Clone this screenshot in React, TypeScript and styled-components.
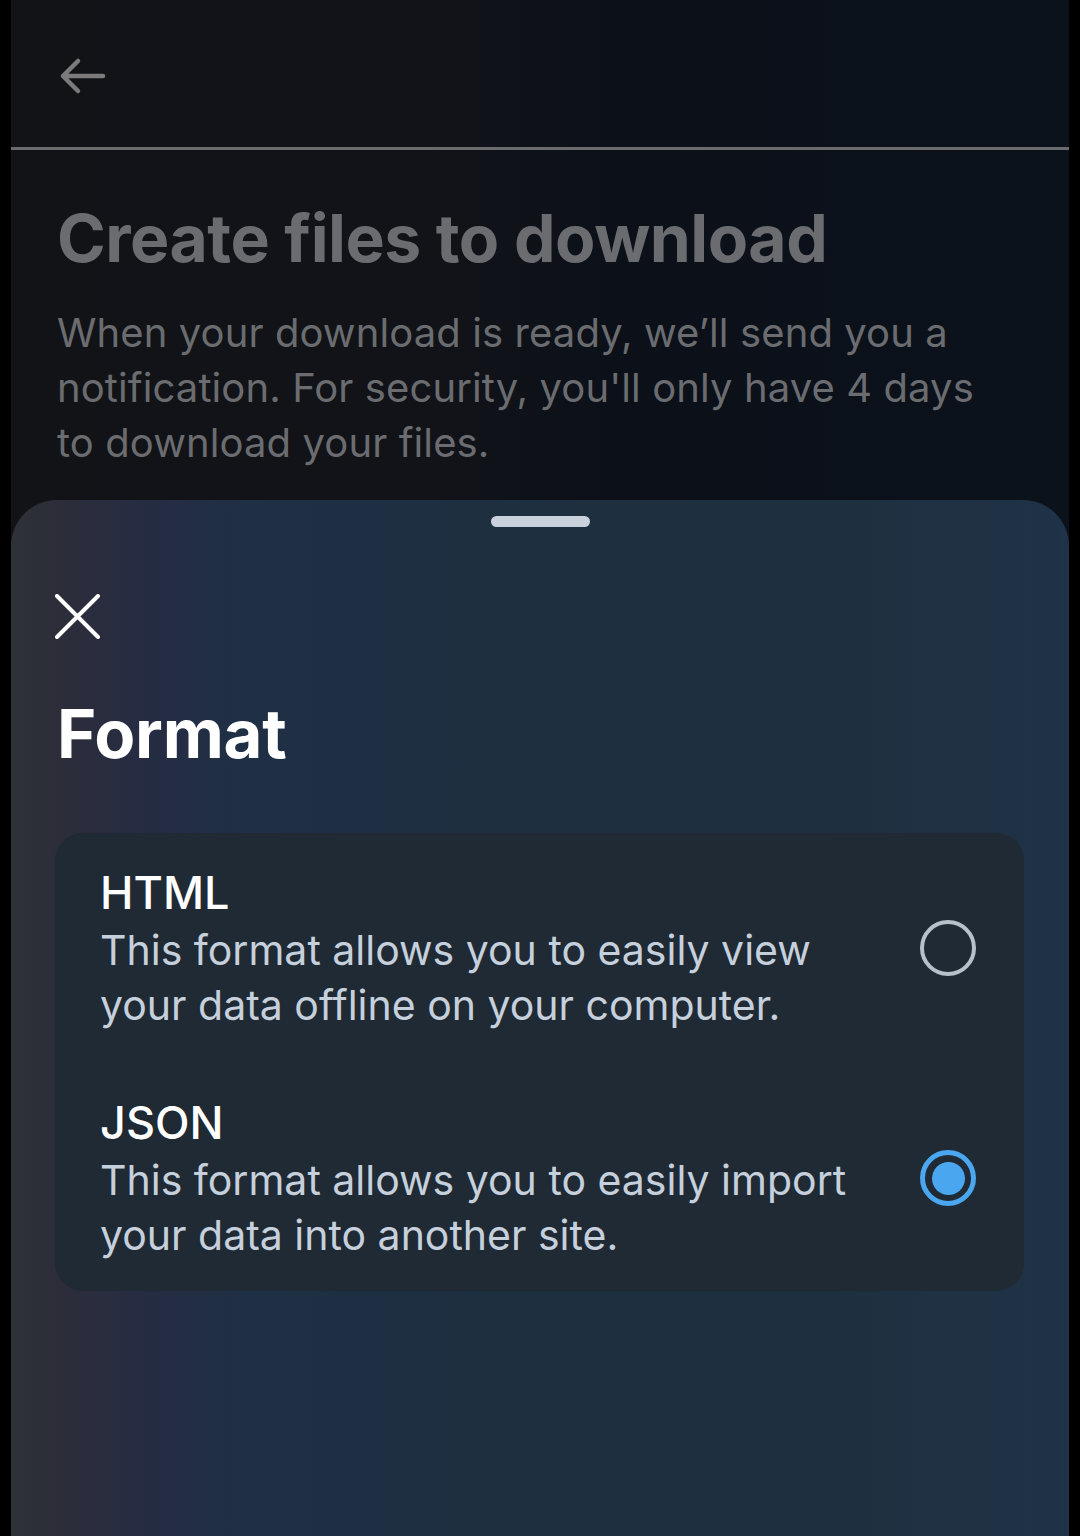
import React from "react";
import styled, { createGlobalStyle } from "styled-components";

const Global = createGlobalStyle`
  html, body { margin: 0; padding: 0; background: #000; }
  body { font-family: Inter, "Noto Sans", sans-serif; -webkit-font-smoothing: antialiased; }
  * { box-sizing: border-box; }
`;

const Screen = styled.div`
  width: 1080px;
  height: 1536px;
  padding: 0 11px;
  background: #000;
  overflow: hidden;
`;

const Page = styled.div`
  height: 100%;
  display: flex;
  flex-direction: column;
  background: linear-gradient(90deg, #121317 0%, #111318 40%, #0b1019 60%, #0c121b 100%);
`;

const TopBar = styled.header`
  height: 150px;
  flex: none;
  display: flex;
  align-items: flex-start;
  padding: 57px 0 0 48px;
  border-bottom: 3px solid #6a6b6d;
`;

const IconButton = styled.button`
  border: 0;
  background: none;
  padding: 0;
  display: flex;
  cursor: pointer;
`;

const Intro = styled.section`
  padding: 48px 46px 0;
  flex: none;
  height: 350px;
`;

const Title = styled.h1`
  margin: 0;
  font-size: 66px;
  font-weight: 700;
  line-height: 80px;
  color: #6b6c6f;
  letter-spacing: -0.5px;
`;

const Paragraph = styled.p`
  margin: 27px 0 0;
  max-width: 935px;
  font-size: 40px;
  line-height: 55px;
  color: #6a6c70;
  letter-spacing: 0.1px;
`;

const Sheet = styled.section`
  flex: 1;
  border-radius: 46px 46px 0 0;
  background:
    linear-gradient(90deg, #2e3136 0%, #2c2d3a 5%, #262c42 12%, #1f2f45 22%, #1e2f40 45%, #1e2f3f 75%, #1f3143 92%, #1e3248 100%);
  display: flex;
  flex-direction: column;
  padding: 16px 44px 0;
`;

const Handle = styled.div`
  align-self: center;
  width: 99px;
  height: 11px;
  border-radius: 6px;
  background: #c8d1dc;
`;

const CloseRow = styled.div`
  margin-top: 67px;
  display: flex;
`;

const SheetTitle = styled.h2`
  margin: 54px 0 0 2px;
  font-size: 67px;
  font-weight: 700;
  line-height: 80px;
  color: #ffffff;
  letter-spacing: -0.2px;
`;

const Card = styled.div`
  margin-top: 59px;
  margin-right: 1px;
  background: #1f2a34;
  border-radius: 28px;
  padding: 30px 0 28px 45px;
  display: flex;
  flex-direction: column;
  gap: 60px;
`;

const Option = styled.label`
  display: flex;
  align-items: center;
  cursor: pointer;
`;

const OptionText = styled.div`
  flex: 1;
  display: flex;
  flex-direction: column;
`;

const OptionName = styled.div`
  font-size: 45px;
  line-height: 60px;
  font-weight: 500;
  color: #ffffff;
`;

const OptionDesc = styled.div`
  font-size: 41px;
  line-height: 55px;
  color: #c6d0dc;
  max-width: 780px;
`;

const Radio = styled.span<{ $checked: boolean }>`
  flex: none;
  width: 56px;
  height: 56px;
  margin: 0 48px 0 20px;
  border-radius: 50%;
  border: ${(p) => (p.$checked ? "5px" : "4px")} solid ${(p) => (p.$checked ? "#4aa7ef" : "#b8c0c9")};
  display: flex;
  align-items: center;
  justify-content: center;
  &::after {
    content: "";
    width: 33px;
    height: 33px;
    border-radius: 50%;
    background: ${(p) => (p.$checked ? "#4aa7ef" : "transparent")};
  }
`;

const options = [
  {
    name: "HTML",
    desc: "This format allows you to easily view your data offline on your computer.",
    checked: false,
  },
  {
    name: "JSON",
    desc: "This format allows you to easily import your data into another site.",
    checked: true,
  },
];

export default function App() {
  return (
    <>
      <Global />
      <Screen>
        <Page>
          <TopBar>
            <IconButton aria-label="Back">
              <svg width="48" height="38" viewBox="0 0 48 38" fill="none">
                <path
                  d="M44 19H4M19 4L4 19l15 15"
                  stroke="#7b7b7c"
                  strokeWidth="4.5"
                  strokeLinecap="round"
                  strokeLinejoin="round"
                />
              </svg>
            </IconButton>
          </TopBar>
          <Intro>
            <Title>Create files to download</Title>
            <Paragraph>
              When your download is ready, we’ll send you a notification. For security, you'll only have 4
              days to download your files.
            </Paragraph>
          </Intro>
          <Sheet>
            <Handle />
            <CloseRow>
              <IconButton aria-label="Close">
                <svg width="46" height="46" viewBox="0 0 46 46" fill="none">
                  <path d="M2 2L43 43M43 2L2 43" stroke="#ffffff" strokeWidth="4" strokeLinecap="round" />
                </svg>
              </IconButton>
            </CloseRow>
            <SheetTitle>Format</SheetTitle>
            <Card>
              {options.map((o) => (
                <Option key={o.name}>
                  <OptionText>
                    <OptionName>{o.name}</OptionName>
                    <OptionDesc>{o.desc}</OptionDesc>
                  </OptionText>
                  <Radio $checked={o.checked} />
                </Option>
              ))}
            </Card>
          </Sheet>
        </Page>
      </Screen>
    </>
  );
}
